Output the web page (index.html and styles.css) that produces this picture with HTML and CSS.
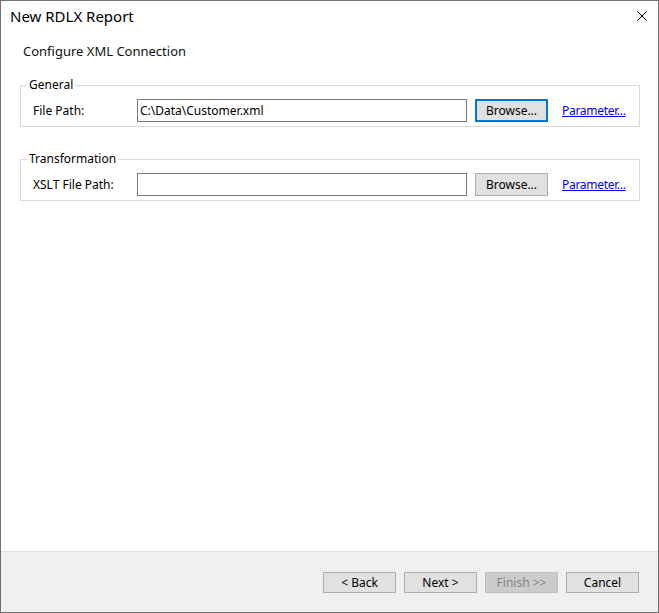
FILE: index.html
```html
<!DOCTYPE html>
<html lang="en">
<head>
  <meta charset="UTF-8">
  <title>New RDLX Report</title>
  <link rel="stylesheet" href="styles.css">
</head>
<body>
  <div class="window">
    <div class="titlebar">
      <span class="title">New RDLX Report</span>
      <span class="close-btn">
        <svg width="10" height="10" viewBox="0 0 10 10"><path d="M0.5 0.5 L9.5 9.5 M9.5 0.5 L0.5 9.5" stroke="#000" stroke-width="1" fill="none"/></svg>
      </span>
    </div>
    <div class="page-head">Configure XML Connection</div>
    <div class="content">
      <fieldset class="group">
        <legend>General</legend>
        <div class="row">
          <label class="row-label">File Path:</label>
          <input type="text" class="path-input" value="C:\Data\Customer.xml">
          <button class="btn btn-focus">Browse...</button>
          <a href="#" class="param-link">Parameter...</a>
        </div>
      </fieldset>
      <fieldset class="group group-second">
        <legend>Transformation</legend>
        <div class="row">
          <label class="row-label">XSLT File Path:</label>
          <input type="text" class="path-input" value="">
          <button class="btn">Browse...</button>
          <a href="#" class="param-link">Parameter...</a>
        </div>
      </fieldset>
    </div>
    <div class="footer">
      <button class="btn btn-wide">&lt; Back</button>
      <button class="btn btn-wide">Next &gt;</button>
      <button class="btn btn-wide" disabled>Finish &gt;&gt;</button>
      <button class="btn btn-wide">Cancel</button>
    </div>
  </div>
</body>
</html>
```

FILE: styles.css
```css
html, body {
  margin: 0;
  padding: 0;
  background: #fff;
}
body {
  font-family: 'Noto Sans', 'Open Sans', sans-serif;
  font-size: 12px;
  color: #000;
}
.window {
  width: 659px;
  height: 613px;
  box-sizing: border-box;
  border: 1px solid #707070;
  background: #fff;
  display: flex;
  flex-direction: column;
}
.titlebar {
  height: 30px;
  display: flex;
  align-items: center;
  justify-content: space-between;
  padding-left: 9px;
}
.titlebar .title {
  font-size: 15px;
}
.close-btn {
  width: 32px;
  height: 30px;
  display: flex;
  align-items: center;
  justify-content: center;
}
.page-head {
  font-size: 13px;
  line-height: 18px;
  padding: 11px 0 0 22px;
  color: #111;
}
.content {
  padding: 17px 18px 0 19px;
}
.group {
  margin: 0;
  padding: 6px 0 4px 12px;
  border: 1px solid #dcdcdc;
  min-width: 0;
}
.group legend {
  font-size: 12px;
  line-height: 16px;
  padding: 0 2px;
  margin-left: -6px;
}
.group-second {
  margin-top: 24px;
}
.row {
  display: flex;
  align-items: center;
  height: 23px;
}
.row-label {
  width: 104px;
}
.path-input {
  width: 330px;
  height: 23px;
  box-sizing: border-box;
  border: 1px solid #7a7a7a;
  padding: 0 2px;
  margin: 0;
  font-family: inherit;
  font-size: 12px;
  color: #000;
  outline: none;
}
.btn {
  width: 73px;
  height: 23px;
  box-sizing: border-box;
  background: #e1e1e1;
  border: 1px solid #adadad;
  border-radius: 0;
  font-family: inherit;
  font-size: 12px;
  color: #000;
  padding: 0;
  margin: 0;
}
.row .btn {
  margin-left: 8px;
}
.btn-focus {
  border: 2px solid #0078d7;
}
.btn:disabled {
  background: #cccccc;
  border-color: #bfbfbf;
  color: #838383;
}
.param-link {
  margin-left: 14px;
  color: #0000ff;
  text-decoration: underline;
  letter-spacing: -0.3px;
}
.footer {
  margin-top: auto;
  height: 61px;
  box-sizing: border-box;
  border-top: 1px solid #dfdfdf;
  background: #f0f0f0;
  display: flex;
  justify-content: flex-end;
  align-items: flex-start;
  gap: 8px;
  padding: 20px 19px 0 0;
}
.footer .btn-wide {
  height: 21px;
}
```
